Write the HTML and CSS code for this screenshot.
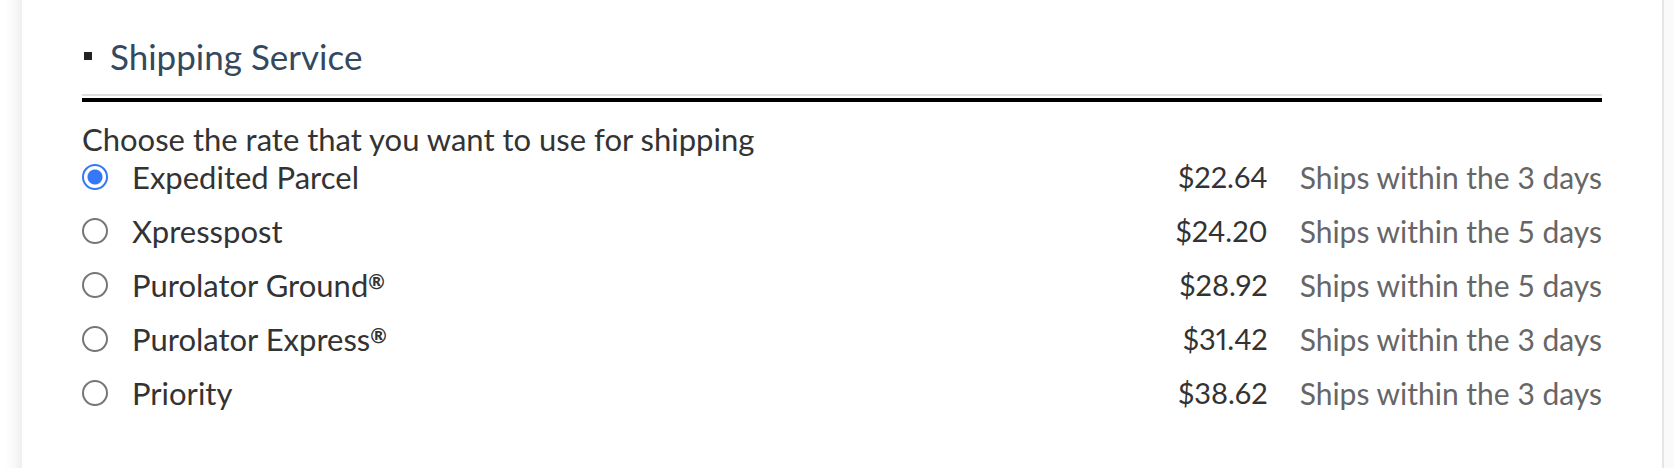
FILE: index.html
```html
<!DOCTYPE html>
<html lang="en">
<head>
<meta charset="utf-8">
<meta name="viewport" content="width=device-width, initial-scale=1">
<title>Shipping Service</title>
<link rel="stylesheet" href="styles.css">
</head>
<body>
<main class="page">
  <section class="panel">
    <header class="panel-header">
      <span class="marker"></span>
      <h2 class="title">Shipping Service</h2>
    </header>
    <fieldset class="rates">
      <legend class="prompt">Choose the rate that you want to use for shipping</legend>
      <label class="rate"><input class="radio" type="radio" name="rate" checked><span class="name">Expedited Parcel</span><span class="price">$22.64</span><span class="eta">Ships within the 3 days</span></label>
      <label class="rate"><input class="radio" type="radio" name="rate"><span class="name">Xpresspost</span><span class="price">$24.20</span><span class="eta">Ships within the 5 days</span></label>
      <label class="rate"><input class="radio" type="radio" name="rate"><span class="name">Purolator Ground<span class="mark">®</span></span><span class="price">$28.92</span><span class="eta">Ships within the 5 days</span></label>
      <label class="rate"><input class="radio" type="radio" name="rate"><span class="name">Purolator Express<span class="mark">®</span></span><span class="price">$31.42</span><span class="eta">Ships within the 3 days</span></label>
      <label class="rate"><input class="radio" type="radio" name="rate"><span class="name">Priority</span><span class="price">$38.62</span><span class="eta">Ships within the 3 days</span></label>
    </fieldset>
  </section>
</main>
</body>
</html>
```
FILE: styles.css
```css
* {
  box-sizing: border-box;
}

body {
  margin: 0;
  background: #fff;
  color: #333;
  font-family: Lato, "Liberation Sans", sans-serif;
  font-size: 31px;
  line-height: 38px;
}

.page {
  display: grid;
  grid-template-columns: 22px 1fr 10px;
  min-height: 100vh;
}

.page::before {
  content: "";
  background: linear-gradient(to right, #fff 20%, #fafafa 60%, #efefef);
}

.page::after {
  content: "";
  background: #fafafa;
}

.panel {
  padding: 30px 60px 48px;
  border-right: 2px solid #e6e6e6;
}

.panel-header {
  display: flex;
  align-items: center;
  gap: 18px;
  padding: 0 0 12px 2px;
  border-bottom: 2px solid #ddd;
}

.marker {
  width: 8px;
  height: 8px;
  background: #222;
}

.title {
  margin: 0;
  color: #34495e;
  font-size: 35px;
  font-weight: 400;
  line-height: 52px;
}

.rates {
  margin: 2px 0 0;
  padding: 18px 0 0;
  border: 0;
  border-top: 4px solid #000;
  min-width: 0;
}

.prompt {
  float: left;
  width: 100%;
  padding: 0;
}

.rate {
  clear: both;
  display: grid;
  grid-template-columns: 26px 1fr auto auto;
  align-items: center;
  height: 38px;
  margin-bottom: 16px;
}

.radio {
  appearance: none;
  width: 26px;
  height: 26px;
  margin: 0;
  border: 2px solid #767676;
  border-radius: 50%;
  background: #fff;
}

.radio:checked {
  border-color: #3478f6;
  background: radial-gradient(circle, #3478f6 7px, #fff 8px);
}

.name {
  padding-left: 24px;
}

.mark {
  font-size: 20px;
  font-weight: 700;
  line-height: 1;
  vertical-align: 8px;
}

.price {
  padding-right: 32px;
  font-size: 29px;
  font-variant-numeric: proportional-nums;
}

.eta {
  color: #666;
  font-size: 30px;
}
```
